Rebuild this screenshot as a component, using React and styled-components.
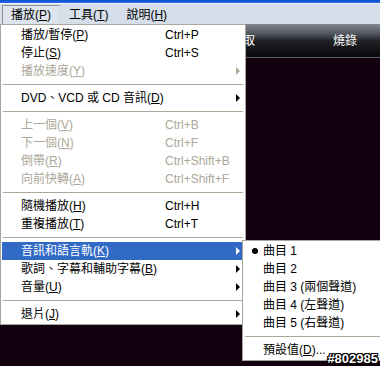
import React from 'react'
import styled, { createGlobalStyle, css } from 'styled-components'

const Global = createGlobalStyle`
  html, body {
    margin: 0;
    padding: 0;
    background: #12000f;
  }
  body {
    font-family: "Liberation Sans", "Noto Sans CJK TC", sans-serif;
    font-size: 12px;
  }
  u {
    text-decoration: underline;
    text-underline-offset: 1px;
  }
`

const Window = styled.div`
  width: 380px;
  height: 366px;
  display: flex;
  flex-direction: column;
  overflow: hidden;
  background: #12000f;
`

const TitleStrip = styled.div`
  height: 3px;
  background: linear-gradient(#0a4fd0, #2a6ae6);
  border-bottom: 1px solid #f4f6fa;
`

const MenuBar = styled.div`
  height: 20px;
  display: flex;
  align-items: flex-end;
  padding-left: 2px;
  background: #d6dee9;
`

const BarItem = styled.div`
  height: 19px;
  line-height: 18px;
  padding: 0 8px;
  color: #000;
  border: 1px solid transparent;
  border-bottom: 0;
  box-sizing: border-box;
  ${p =>
    p.$open &&
    css`
      border-color: #8f8f8f #d8d8d8 transparent #8f8f8f;
      background: #dde4ee;
    `}
`

const Stage = styled.div`
  flex: 1;
  position: relative;
  background: #12000f;
`

const Toolbar = styled.div`
  height: 33px;
  display: flex;
  align-items: center;
  padding-left: 192px;
  background: linear-gradient(#80858f 0%, #50555e 30%, #1d1f24 52%, #08090b 100%);
  border-bottom: 1px solid #5d636c;
`

const Tab = styled.div`
  flex: 0 0 102px;
  text-align: center;
  color: #fff;
  line-height: 18px;
`

const Menu = styled.div`
  position: absolute;
  left: ${p => p.$left}px;
  top: ${p => p.$top}px;
  width: ${p => p.$width}px;
  box-sizing: border-box;
  padding: 1px;
  background: #fff;
  border: 1px solid #a7a6a0;
`

const Item = styled.div`
  height: 18px;
  line-height: 18px;
  display: grid;
  grid-template-columns: ${p => (p.$sub ? '19px 1fr' : '19px 144px 1fr 10px')};
  align-items: center;
  padding-right: 4px;
  white-space: nowrap;
  color: ${p => (p.$disabled ? '#aca899' : '#000')};
  ${p =>
    p.$active &&
    css`
      background: #316ac5;
      color: #fff;
    `}
`

const Shortcut = styled.span``

const Arrow = styled.span`
  justify-self: end;
  width: 0;
  height: 0;
  border-top: 4px solid transparent;
  border-bottom: 4px solid transparent;
  border-left: 4px solid currentColor;
`

const Bullet = styled.span`
  justify-self: center;
  margin-left: 2px;
  width: 6px;
  height: 6px;
  border-radius: 50%;
  background: #000;
`

const Separator = styled.div`
  height: 1px;
  margin: 4px 1px;
  background: #aca899;
`

const Watermark = styled.div`
  position: absolute;
  right: 2px;
  bottom: 1px;
  font-family: "Liberation Sans", sans-serif;
  font-weight: bold;
  font-size: 13px;
  line-height: 13px;
  color: #fff;
  text-shadow: 1px 0 0 #000, -1px 0 0 #000, 0 1px 0 #000, 0 -1px 0 #000,
    1px 1px 0 #000, -1px -1px 0 #000, 1px -1px 0 #000, -1px 1px 0 #000;
`

const Mn = ({ k }) => (
  <>
    (<u>{k}</u>)
  </>
)

const playMenu = [
  { label: '播放/暫停', key: 'P', shortcut: 'Ctrl+P' },
  { label: '停止', key: 'S', shortcut: 'Ctrl+S' },
  { label: '播放速度', key: 'Y', disabled: true, sub: true },
  'sep',
  { label: 'DVD、VCD 或 CD 音訊', key: 'D', sub: true },
  'sep',
  { label: '上一個', key: 'V', shortcut: 'Ctrl+B', disabled: true },
  { label: '下一個', key: 'N', shortcut: 'Ctrl+F', disabled: true },
  { label: '倒帶', key: 'R', shortcut: 'Ctrl+Shift+B', disabled: true },
  { label: '向前快轉', key: 'A', shortcut: 'Ctrl+Shift+F', disabled: true },
  'sep',
  { label: '隨機播放', key: 'H', shortcut: 'Ctrl+H' },
  { label: '重複播放', key: 'T', shortcut: 'Ctrl+T' },
  'sep',
  { label: '音訊和語言軌', key: 'K', sub: true, active: true },
  { label: '歌詞、字幕和輔助字幕', key: 'B', sub: true },
  { label: '音量', key: 'U', sub: true },
  'sep',
  { label: '退片', key: 'J', sub: true },
]

const tracks = ['曲目 1', '曲目 2', '曲目 3 (兩個聲道)', '曲目 4 (左聲道)', '曲目 5 (右聲道)']

export default function App() {
  return (
    <>
      <Global />
      <Window>
        <TitleStrip />
        <MenuBar>
          <BarItem $open>
            播放<Mn k="P" />
          </BarItem>
          <BarItem>
            工具<Mn k="T" />
          </BarItem>
          <BarItem>
            說明<Mn k="H" />
          </BarItem>
        </MenuBar>
        <Stage>
          <Toolbar>
            <Tab>擷取</Tab>
            <Tab>燒錄</Tab>
          </Toolbar>

          <Menu $left={0} $top={0} $width={246}>
            {playMenu.map((entry, i) =>
              entry === 'sep' ? (
                <Separator key={i} />
              ) : (
                <Item key={i} $disabled={entry.disabled} $active={entry.active}>
                  <span />
                  <span>
                    {entry.label}
                    <Mn k={entry.key} />
                  </span>
                  <Shortcut>{entry.shortcut}</Shortcut>
                  {entry.sub ? <Arrow /> : <span />}
                </Item>
              )
            )}
          </Menu>

          <Menu $left={242} $top={216} $width={160}>
            {tracks.map((t, i) => (
              <Item key={t} $sub>
                {i === 0 ? <Bullet /> : <span />}
                <span>{t}</span>
              </Item>
            ))}
            <Separator />
            <Item $sub>
              <span />
              <span>
                預設值<Mn k="D" />...
              </span>
            </Item>
          </Menu>

          <Watermark>#802985</Watermark>
        </Stage>
      </Window>
    </>
  )
}
